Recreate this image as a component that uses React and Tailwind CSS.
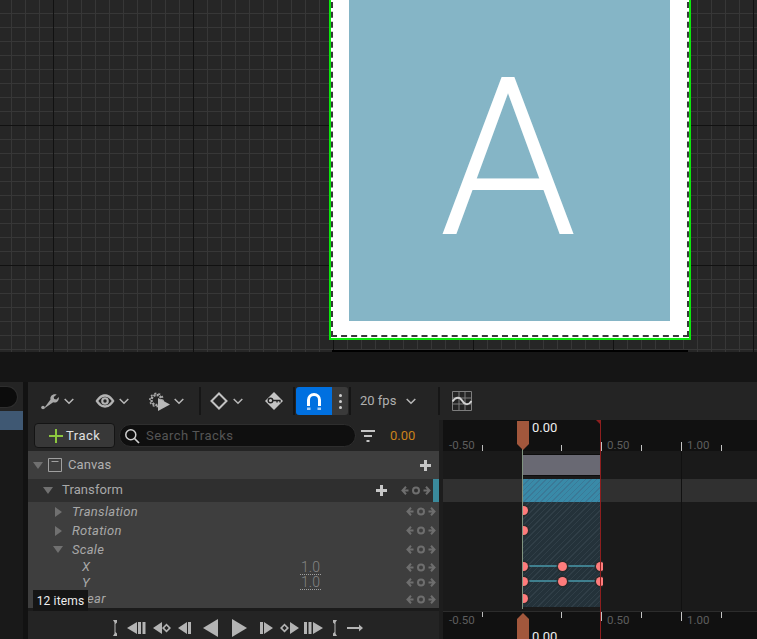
const F = "[font-family:Roboto,'Liberation_Sans',sans-serif]";

function Chevron({ className = "" }) {
  return (
    <svg width="10" height="7" viewBox="0 0 10 7" className={className}>
      <path d="M.7 1l4.3 4.3L9.3 1" fill="none" stroke="#b8b8b8" strokeWidth="1.5" />
    </svg>
  );
}

function Triple({ className = "" }) {
  return (
    <svg width="30" height="11" viewBox="0 0 30 11" className={className}>
      <g fill="none" stroke="#6e6e6e" strokeWidth="2">
        <path d="M7.5 5.5H1.5M5 1.8L1.5 5.5 5 9.2" />
        <circle cx="15" cy="5.5" r="3" />
        <path d="M22.5 5.5h6M25 1.8l3.5 3.7L25 9.2" />
      </g>
    </svg>
  );
}

function TreeRow({ h, label, pl, arrow, italic, value, bg = "" }) {
  return (
    <div className={`flex items-center ${h} ${bg}`}>
      <div className={`flex items-center ${pl}`}>
        {arrow === "right" && (
          <svg width="7" height="10" viewBox="0 0 7 10" className="mr-[10px]">
            <path d="M0 0l7 5-7 5z" fill="#707070" />
          </svg>
        )}
        {arrow === "down" && (
          <svg width="10" height="7" viewBox="0 0 10 7" className="mr-[9px] ml-[-2px]">
            <path d="M0 0h10L5 7z" fill="#707070" />
          </svg>
        )}
        <span className={`text-[13px] tracking-[0.3px] text-[#a8a8a8] ${italic ? "italic" : ""}`}>{label}</span>
      </div>
      {value && (
        <span className="absolute left-[272px] text-[14px] font-light leading-[14px] text-[#858585] w-[21px] text-center border-b border-dotted border-[#a0a0a0]">
          {value}
        </span>
      )}
      <Triple className="ml-auto mr-[3px]" />
    </div>
  );
}

function Ruler({ bottom }) {
  const ticks = [
    [561, 0],
    [601, 1],
    [641, 0],
    [681, 1],
    [721, 0],
  ];
  return (
    <div className={`relative h-full w-full ${bottom ? "bg-[#111111] border-t border-[#2c2c2c]" : "bg-[#111111]"}`}>
      <span className={`absolute left-[6px] ${bottom ? "top-[1px]" : "top-[18px]"} text-[11.5px] leading-[14px] text-[#5e5e5e]`}>-0.50</span>
      <span className={`absolute left-[39px] ${bottom ? "top-0 h-[5px]" : "top-[25px] h-[6px]"} w-px bg-[#bbbbbb]`} />
      {ticks.map(([x, big]) => (
        <span
          key={x}
          className={`absolute w-px bg-[#c4c4c4] ${bottom ? "top-0" : "bottom-0"} ${big ? "h-[9px]" : "h-[6px]"}`}
          style={{ left: x - 443 }}
        />
      ))}
      <span className={`absolute left-[164px] ${bottom ? "top-[1px]" : "top-[18px]"} text-[11.5px] leading-[14px] text-[#5e5e5e]`}>0.50</span>
      <span className={`absolute left-[244px] ${bottom ? "top-[1px]" : "top-[18px]"} text-[11.5px] leading-[14px] text-[#5e5e5e]`}>1.00</span>
    </div>
  );
}

function Key({ x, y }) {
  return (
    <span
      className="absolute h-[9px] w-[9px] rounded-full bg-[#ff7c7c] shadow-[0_0_0_1.5px_rgba(40,40,40,0.8)]"
      style={{ left: x - 443 - 4.5, top: y - 451 - 4.5 }}
    />
  );
}

function Btn({ w, ml, d }) {
  return (
    <svg width={w} height="18" viewBox={`0 0 ${w} 18`} style={{ marginLeft: ml }} className="shrink-0">
      <path d={d} fill="#b4b4b4" fillRule="evenodd" />
    </svg>
  );
}

const diamond = (c) => `M${c} 4.5l4.5 4.5-4.5 4.5-4.5-4.5zM${c} 6.8l-2.2 2.2 2.2 2.2 2.2-2.2z`;

export default function App() {
  return (
    <div className={`h-[639px] w-[757px] overflow-hidden bg-[#151515] ${F}`}>
      {/* Viewport */}
      <div className="relative h-[352px] overflow-hidden bg-[#262626] bg-[linear-gradient(to_right,#111111_1px,transparent_1px),linear-gradient(to_bottom,#111111_1px,transparent_1px),linear-gradient(to_right,#373737_1px,transparent_1px),linear-gradient(to_bottom,#373737_1px,transparent_1px)] bg-[size:140px_140px,140px_140px,14px_14px,14px_14px] bg-[position:53px_125px,53px_125px,11px_13px,11px_13px]">
        <div className="absolute left-[329px] top-[-40px] h-[380px] w-[362px] border-[2px] border-[#0ce80c] bg-white px-[18px]">
          <div className="flex h-[359px] w-[321px] items-start justify-center overflow-hidden bg-[#85b5c6]">
            <span className="mt-[73px] ml-[-3px] text-[220px] font-light leading-[248px] text-white">A</span>
          </div>
          <div className="absolute inset-[0_0_1px_0] border-[2px] border-dashed border-[#3a3a3a]" />
        </div>
        <div className="absolute left-[332px] top-[350px] h-[2px] w-[356px] bg-black" />
      </div>
      <div className="h-[30px] bg-[#151515]" />
      {/* Main */}
      <div className="flex h-[257px]">
        {/* Left */}
        <div className="flex w-[28px] shrink-0">
          <div className="w-[23px] bg-[#191919]">
            <div className="h-[29px] bg-[#242424] pt-[4px]">
              <div className="h-[22px] w-[18px] rounded-r-full border border-l-0 border-[#2e2e2e] bg-[#0c0c0c]" />
            </div>
            <div className="h-[19px] bg-[#3f5873]" />
          </div>
          <div className="w-[5px] bg-[#121212]" />
        </div>
        {/* Center */}
        <div className="flex min-w-0 flex-1 flex-col">
          {/* Toolbar */}
          <div className="flex h-[38px] items-center bg-[#242424] text-[#b4b4b4]">
            <svg width="20" height="18" viewBox="0 0 20 18" className="ml-[12px]">
              <path d="M1.5 15.5L10 8M10.5 7.5c-.8-3.2 2.2-6.2 6.2-5l-3 2.4.5 2.2 2.2.5 2.4-2.6c.6 3.8-2.6 6.6-5.6 5.3L3.5 17z" fill="#a8a8a8" />
              <circle cx="3" cy="15.5" r="1.8" fill="#a8a8a8" />
            </svg>
            <Chevron className="ml-[4px]" />
            <svg width="20" height="14" viewBox="0 0 21 14" className="ml-[21px]">
              <path d="M0.5 7C4 1.5 7.5 0 10.5 0S17 1.5 20.5 7C17 12.5 13.5 14 10.5 14S4 12.5 .5 7z" fill="#b4b4b4" />
              <path d="M3.5 7C6 3.5 8 2.5 10.5 2.5S15 3.5 17.5 7C15 10.5 13 11.5 10.5 11.5S6 10.5 3.5 7z" fill="#242424" />
              <circle cx="10.5" cy="7" r="4" fill="#b4b4b4" />
              <circle cx="10.5" cy="7" r="1.8" fill="#242424" />
            </svg>
            <Chevron className="ml-[4px]" />
            <svg width="21" height="19" viewBox="0 0 21 19" className="ml-[20px]">
              <circle cx="7.5" cy="8" r="5" fill="none" stroke="#a8a8a8" strokeWidth="2.4" strokeDasharray="2.2 1.1" />
              <circle cx="7.5" cy="8" r="6.6" fill="none" stroke="#a8a8a8" strokeWidth="1.6" strokeDasharray="2 2.1" />
              <path d="M9 6l12 6.5L9 19z" fill="#b8b8b8" />
            </svg>
            <Chevron className="ml-[4px]" />
            <span className="ml-[15px] h-[28px] w-[2px] bg-[#161616]" />
            <svg width="18" height="18" viewBox="0 0 18 18" className="ml-[9px]">
              <path d="M9 1.5L16.5 9 9 16.5 1.5 9z" fill="none" stroke="#c2c2c2" strokeWidth="2" />
            </svg>
            <Chevron className="ml-[5px]" />
            <svg width="20" height="20" viewBox="0 0 20 20" className="ml-[21px]">
              <path d="M10 1l9 9-9 9-9-9z" fill="#c4c4c4" />
              <circle cx="6.5" cy="9.5" r="2.3" fill="none" stroke="#242424" strokeWidth="1.4" />
              <path d="M8.5 9.5h7.5v2M13 9.5v2" fill="none" stroke="#242424" strokeWidth="1.4" />
            </svg>
            <span className="ml-[9px] h-[28px] w-[2px] bg-[#151515]" />
            <div className="ml-[1px] flex h-[28px]">
              <div className="flex w-[36px] items-center justify-center rounded-l-[3px] bg-[#0070e0]">
                <svg width="16" height="19" viewBox="0 0 16 19">
                  <path d="M2.5 14V8a5.5 5.5 0 0 1 11 0v6" fill="none" stroke="#ffffff" strokeWidth="3" />
                  <path d="M1 15.5h3.5V18H1zM11.5 15.5H15V18h-3.5z" fill="#a8cdf5" />
                </svg>
              </div>
              <div className="flex w-[16px] flex-col items-center justify-center gap-[3px] rounded-r-[3px] bg-[#3a3a3a]">
                <span className="h-[3px] w-[3px] rounded-full bg-[#d0d0d0]" />
                <span className="h-[3px] w-[3px] rounded-full bg-[#d0d0d0]" />
                <span className="h-[3px] w-[3px] rounded-full bg-[#d0d0d0]" />
              </div>
            </div>
            <span className="ml-[1px] h-[28px] w-[2px] bg-[#151515]" />
            <span className="ml-[9px] w-[36px] whitespace-nowrap text-[13px] text-[#b0b0b0]">20 fps</span>
            <Chevron className="ml-[10px]" />
            <span className="ml-[22px] h-[28px] w-[2px] bg-[#161616]" />
            <svg width="20" height="20" viewBox="0 0 20 20" className="ml-[12px]">
              <path d="M.5.5h19v19H.5zM7 .5v19M13 .5v19M.5 7h19M.5 13h19" fill="none" stroke="#7d7d7d" />
              <path d="M.5 10.5C4 5 8 6 10 9.5s6 6 9.5.5" fill="none" stroke="#d0d0d0" strokeWidth="2" />
            </svg>
          </div>
          {/* Tracks */}
          <div className="flex min-h-0 flex-1">
            <div className="flex w-[411px] shrink-0 flex-col bg-[#242424]">
              <div className="flex h-[31px] items-center">
                <div className="ml-[6px] flex h-[25px] w-[81px] items-center rounded-[4px] border border-[#141414] bg-[#383838] pl-[14px]">
                  <svg width="14" height="14" viewBox="0 0 14 14">
                    <path d="M6 0h2v6h6v2H8v6H6V8H0V6h6z" fill="#8cc63f" />
                  </svg>
                  <span className="ml-[3px] text-[13px] tracking-[0.5px] text-[#e0e0e0]">Track</span>
                </div>
                <div className="ml-[4px] flex h-[23px] w-[237px] items-center rounded-full border border-[#2e2e2e] bg-[#0f0f0f] pl-[4px]">
                  <svg width="16" height="16" viewBox="0 0 16 16">
                    <circle cx="6.8" cy="6.8" r="5" fill="none" stroke="#d0d0d0" strokeWidth="1.5" />
                    <path d="M10.5 10.5l4.5 4.5" stroke="#d0d0d0" strokeWidth="1.7" />
                  </svg>
                  <span className="ml-[6px] text-[13px] tracking-[0.45px] text-[#555555]">Search Tracks</span>
                </div>
                <svg width="14" height="12" viewBox="0 0 14 12" className="ml-[5px]">
                  <path d="M0 0h14v2H0zM3 5h8v2H3zM5.5 10h3v2h-3z" fill="#c4c4c4" />
                </svg>
                <span className="ml-[15px] text-[13px] text-[#c9821a]">0.00</span>
              </div>
              <div className="flex h-[28px] items-center bg-[#3e3e3e]">
                <svg width="10" height="7" viewBox="0 0 10 7" className="ml-[5px]">
                  <path d="M0 0h10L5 7z" fill="#707070" />
                </svg>
                <svg width="14" height="14" viewBox="0 0 14 14" className="ml-[5px]">
                  <path d="M.5.5h13v13H.5z M3.5 3.5h7" fill="none" stroke="#a0a0a0" />
                </svg>
                <span className="ml-[6px] text-[13px] tracking-[0.1px] text-[#b0b0b0]">Canvas</span>
                <svg width="11" height="11" viewBox="0 0 11 11" className="ml-auto mr-[8px]">
                  <path d="M4 0h3v4h4v3H7v4H4V7H0V4h4z" fill="#c8c8c8" />
                </svg>
              </div>
              <div className="flex h-[23px] items-center bg-[#2f2f2f] pb-[1px]">
                <svg width="10" height="7" viewBox="0 0 10 7" className="ml-[15px]">
                  <path d="M0 0h10L5 7z" fill="#707070" />
                </svg>
                <span className="ml-[9px] text-[13px] tracking-[0.1px] text-[#a8a8a8]">Transform</span>
                <svg width="11" height="11" viewBox="0 0 11 11" className="ml-auto">
                  <path d="M4 0h3v4h4v3H7v4H4V7H0V4h4z" fill="#c8c8c8" />
                </svg>
                <Triple className="ml-[14px]" />
                <span className="ml-[2px] mb-[-1px] h-[23px] w-[6px] bg-[#3a8a9c]" />
              </div>
              <div className="relative flex flex-1 flex-col bg-[#3e3e3e]">
                <TreeRow h="h-[19px]" pl="pl-[27px]" arrow="right" italic label="Translation" />
                <TreeRow h="h-[19px]" pl="pl-[27px]" arrow="right" italic label="Rotation" />
                <TreeRow h="h-[19px]" pl="pl-[27px]" arrow="down" italic label="Scale" />
                <TreeRow h="h-[16px]" pl="pl-[54px]" italic label="X" value="1.0" />
                <TreeRow h="h-[15px]" pl="pl-[54px]" italic label="Y" value="1.0" />
                <TreeRow h="h-[18px]" pl="pl-[44px]" italic label="Shear" />
              </div>
              <div className="h-[3px] bg-[#1b1b1b]" />
              <div className="flex h-[28px] items-center pt-[6px]">
                <Btn w={5} ml={84} d="M1 1h4v2.5L3.5 5v8L5 14.5V17H1l1.5-2.5v-11z" />
                <Btn w={19} ml={10} d="M0 9L10 3v12zM11 3h3v12h-3zM15.5 3h3v12h-3z" />
                <Btn w={18} ml={7} d={"M0 9L9 3v12z" + diamond(13.5)} />
                <Btn w={13} ml={7} d="M0 9L9 3v12zM10 3h3v12h-3z" />
                <Btn w={15} ml={12} d="M0 9L15 0v18z" />
                <Btn w={15} ml={14} d="M0 0l15 9L0 18z" />
                <Btn w={13} ml={13} d="M0 3h3v12H0zM4 3l9 6-9 6z" />
                <Btn w={19} ml={7} d={diamond(4.5) + "M10 3l9 6-9 6z"} />
                <Btn w={19} ml={5} d="M0 3h3v12H0zM4.5 3h3v12h-3zM9 3l10 6-10 6z" />
                <Btn w={5} ml={10} d="M0 1h4L2.5 3.5v11L4 17H0v-2.5L1.5 13V5L0 3.5z" />
                <Btn w={16} ml={9} d="M0 8h12V5.5L16 9l-4 3.5V10H0z" />
              </div>
            </div>
            <div className="w-[4px] bg-[#1d1d1d]" />
            {/* Timeline */}
            <div className="relative flex flex-1 flex-col bg-[#1a1a1a] text-[12px]">
              <div className="h-[31px]"><Ruler /></div>
              <div className="h-[28px]" />
              <div className="h-[23px] bg-[#303030]" />
              <div className="flex-1" />
              <div className="h-[28px]"><Ruler bottom /></div>
              {/* grid line */}
              <span className="absolute left-[238px] top-[31px] h-[159px] w-px bg-[#111111]" />
              {/* section overlays */}
              <div className="absolute left-[80px] top-[34px] h-[22px] w-[77px] border-y border-[#0d0d0d] bg-[#696973]" />
              <div className="absolute left-[80px] top-[59px] h-[23px] w-[78px] bg-[#398aa8] bg-[repeating-linear-gradient(135deg,rgba(60,110,140,0.6)_0_1px,transparent_1px_4px)]" />
              <div className="absolute left-[80px] top-[82px] h-[105px] w-[77px] overflow-hidden bg-[#24323a] bg-[repeating-linear-gradient(135deg,rgba(70,85,95,0.35)_0_1px,transparent_1px_4px)]" />
              <div className="absolute left-[80px] top-[31px] h-[180px] w-[78px] overflow-hidden">
                <span className="absolute left-[5px] top-[114px] h-[2px] w-[33px] bg-[#3f7f8e]" />
                <span className="absolute left-[45px] top-[114px] h-[2px] w-[27px] bg-[#3f7f8e]" />
                <span className="absolute left-[5px] top-[129px] h-[2px] w-[33px] bg-[#3f7f8e]" />
                <span className="absolute left-[45px] top-[129px] h-[2px] w-[27px] bg-[#3f7f8e]" />
              </div>
              <div className="absolute left-[80px] top-[31px] h-[160px] w-[80px] overflow-hidden">
                <div className="relative ml-[-80px] h-full w-[240px]">
                  <Key x={523} y={510} />
                  <Key x={523} y={530} />
                  <Key x={523} y={566} />
                  <Key x={523} y={581} />
                  <Key x={523} y={598} />
                  <Key x={562} y={566} />
                  <Key x={562} y={581} />
                  <Key x={600} y={566} />
                  <Key x={600} y={581} />
                </div>
              </div>
              {/* end red marker */}
              <span className="absolute left-[157px] top-0 h-full w-px bg-[#8e1e1e]" />
              <svg width="5" height="5" viewBox="0 0 5 5" className="absolute left-[153px] top-0">
                <path d="M0 0h5v5z" fill="#8e1e1e" />
              </svg>
              {/* playhead line */}
              <span className="absolute left-[79px] top-[29px] h-[160px] w-px bg-[#7f937f]" />
              {/* playhead top */}
              <svg width="12" height="29" viewBox="0 0 12 29" className="absolute left-[74px] top-[1px]">
                <path d="M0 0h12v23l-6 6-6-6z" fill="#a2573c" />
              </svg>
              <span className="absolute left-[89px] top-0 text-[13px] leading-[16px] text-[#eeeeee]">0.00</span>
              <svg width="12" height="26" viewBox="0 0 12 26" className="absolute left-[74px] top-[193px]">
                <path d="M6 0l6 6v20H0V6z" fill="#a2573c" />
              </svg>
              <span className="absolute left-[89px] top-[209px] text-[13px] leading-[16px] text-[#eeeeee]">0.00</span>
            </div>
          </div>
        </div>
      </div>
      {/* tooltip */}
      <div className="absolute left-[33px] top-[590px] flex h-[21px] w-[55px] items-center justify-center bg-[#151515] text-[12px] tracking-[0.15px] text-[#eeeeee]">
        12 items
      </div>
    </div>
  );
}
